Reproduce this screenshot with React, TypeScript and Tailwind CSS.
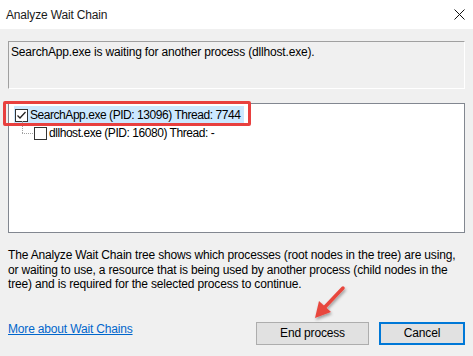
import React from 'react';

const font = { fontFamily: '"Liberation Sans", Arial, sans-serif' };

function CheckBox({ checked }: { checked?: boolean }) {
  return (
    <span className="w-[13px] h-[13px] border border-[#333333] bg-white flex items-center justify-center shrink-0">
      {checked && (
        <svg width="11" height="11" viewBox="0 0 11 11">
          <path d="M1.5 5.5 L4 8 L9.5 2" fill="none" stroke="#222" strokeWidth="1.3" />
        </svg>
      )}
    </span>
  );
}

export default function App() {
  return (
    <div className="relative w-[473px] h-[356px] bg-[#f0f0f0] text-[12px] tracking-[-0.17px] text-black overflow-hidden" style={font}>
      {/* title bar */}
      <div className="h-[29px] bg-white flex items-center justify-between pl-[6px] pr-[8px]">
        <span className="text-[12px] text-[#1a1a1a]">Analyze Wait Chain</span>
        <svg width="11" height="11" viewBox="0 0 11 11">
          <path d="M0.5 0.5 L10.5 10.5 M10.5 0.5 L0.5 10.5" stroke="#111" strokeWidth="1" />
        </svg>
      </div>

      <div className="px-[8px]">
        {/* status message */}
        <div className="mt-[12px] h-[48px] border border-t-[#a0a0a0] border-l-[#a0a0a0] border-r-white border-b-white pl-[2px] pt-[2px] leading-[16px]">
          SearchApp.exe is waiting for another process (dllhost.exe).
        </div>

        {/* tree */}
        <div className="mt-[14px] h-[130px] border border-[#828790] bg-white pt-[2px] tracking-[-0.45px]">
          <div className="flex items-center w-fit h-[18px] ml-[5px] bg-[#cce8ff] pl-[1px] pr-[4px] gap-[2px]">
            <CheckBox checked />
            <span className="whitespace-nowrap">SearchApp.exe (PID: 13096) Thread: 7744</span>
          </div>
          <div className="flex items-center h-[18px] ml-[13px]">
            <div className="relative w-[12px] h-[18px] shrink-0">
              <div className="absolute left-0 top-[-3px] h-[12px] border-l border-dotted border-[#a0a0a0]" />
              <div className="absolute left-0 top-[9px] w-[11px] border-t border-dotted border-[#a0a0a0]" />
            </div>
            <CheckBox />
            <span className="ml-[2px] whitespace-nowrap">dllhost.exe (PID: 16080) Thread: -</span>
          </div>
        </div>

        {/* description */}
        <p className="mt-[15px] leading-[14.5px]">
          The Analyze Wait Chain tree shows which processes (root nodes in the tree) are using, or waiting to use, a resource that is being used by another process (child nodes in the tree) and is required for the selected process to continue.
        </p>

        {/* bottom row */}
        <div className="mt-[30px] flex items-center">
          <a className="text-[#0066cc] underline -mt-[8px]" href="#">More about Wait Chains</a>
          <div className="ml-auto flex gap-[10px]">
            <button className="w-[113px] h-[23px] bg-[#e1e1e1] border border-[#adadad] text-[12px]">End process</button>
            <button className="w-[86px] h-[23px] bg-[#e1e1e1] border-2 border-[#0078d7] text-[12px]">Cancel</button>
          </div>
        </div>
      </div>

      {/* annotation: red box */}
      <div className="absolute left-[3px] top-[101px] w-[248px] h-[25px] border-[3px] border-[#e8403f] rounded-[2px]" />

      {/* annotation: arrow */}
      <svg className="absolute left-0 top-0 pointer-events-none" width="473" height="356" viewBox="0 0 473 356">
        <defs>
          <filter id="sh" x="-50%" y="-50%" width="200%" height="200%">
            <feDropShadow dx="1" dy="2" stdDeviation="1.5" floodColor="#000" floodOpacity="0.35" />
          </filter>
        </defs>
        <g filter="url(#sh)">
          <path d="M343 288 L324 308" stroke="#e8463e" strokeWidth="3.5" strokeLinecap="round" />
          <path d="M315 318 L319 301 L331 312 Z" fill="#e8463e" />
        </g>
      </svg>
    </div>
  );
}
